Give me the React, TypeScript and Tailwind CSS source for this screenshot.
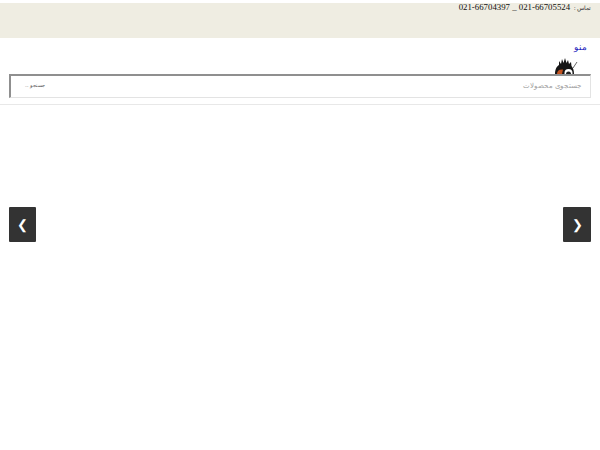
const LogoMark = () => (
  <svg width="24" height="16" viewBox="0 0 24 16" className="block">
    <path d="M1 16 C1 11 3 8 5 7 L5 3 L7 6 L8 1 L9.500 5 L11 0 L12.500 5 L14 2 L15 6 L17 4 L17.500 8 C19 10 20 12 20 16 Z" fill="#161616" />
    <path d="M19 10 L23 4" stroke="#666" strokeWidth="1" />
    <path d="M3 16 C3 13 5 11 9 11.500 L8 16 Z" fill="#c2521f" />
    <circle cx="14.500" cy="15" r="4" fill="#fff" />
    <circle cx="14.500" cy="16" r="2.500" fill="#222" />
  </svg>
);

const SliderArrow = ({ label, className }: { label: string; className: string }) => (
  <div
    dir="ltr"
    className={`absolute top-[207px] flex h-[35px] items-center justify-center rounded-[1px] bg-[#333333] text-[13px] text-white ${className}`}
  >
    {label}
  </div>
);

export default function App() {
  return (
    <div dir="rtl" className="relative h-[450px] w-[600px] overflow-hidden bg-white font-['Liberation_Serif',serif] text-black">
      <div className="mt-[3px] flex h-[35px] items-start gap-[4px] bg-[#efede2] pr-[9px]">
        <span className="text-[5.500px] leading-[10px] text-[#333333]">تماس :</span>
        <span dir="ltr" className="text-[8.800px] leading-[9px] text-[#111111]">021-66704397 _ 021-66705524</span>
      </div>

      <div className="pr-[13px] pt-[3px] text-[9px] font-normal leading-[12px] text-[#2222bb]">منو</div>

      <div className="mt-[5px] h-[16px] pr-[22px]">
        <LogoMark />
      </div>

      <div className="relative mx-[9px] flex h-[24px] items-center justify-between border border-[#e3e3e3] border-l-2 border-t-2 border-l-[#8f8f8f] border-t-[#8f8f8f] bg-white pl-[14px] pr-[9px]">
        <span className="text-[7.300px] text-[#a0a0a0]">جستجوی محصولات</span>
        <span className="text-[4.500px] text-[#555555]">جستجو ...</span>
      </div>

      <div className="mt-[6px] h-px bg-[#e8e8e8]" />

      <SliderArrow label="❯" className="right-[9px] w-[28px]" />
      <SliderArrow label="❮" className="left-[9px] w-[27px]" />
    </div>
  );
}
